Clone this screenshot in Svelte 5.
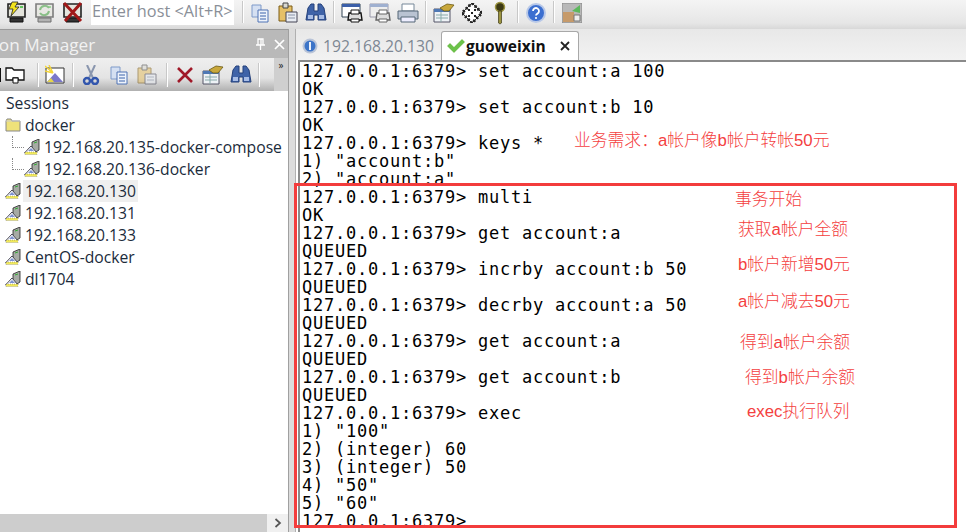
<script lang="ts">
  const lines = [
    '127.0.0.1:6379> set account:a 100', 'OK',
    '127.0.0.1:6379> set account:b 10', 'OK',
    '127.0.0.1:6379> keys *', '1) "account:b"', '2) "account:a"',
    '127.0.0.1:6379> multi', 'OK',
    '127.0.0.1:6379> get account:a', 'QUEUED',
    '127.0.0.1:6379> incrby account:b 50', 'QUEUED',
    '127.0.0.1:6379> decrby account:a 50', 'QUEUED',
    '127.0.0.1:6379> get account:a', 'QUEUED',
    '127.0.0.1:6379> get account:b', 'QUEUED',
    '127.0.0.1:6379> exec',
    '1) "100"', '2) (integer) 60', '3) (integer) 50', '4) "50"', '5) "60"',
    '127.0.0.1:6379>'
  ];

  // hand-placed notes on top of the terminal
  const notes = [
    { text: '业务需求：a帐户像b帐户转帐50元', x: 574, y: 130 },
    { text: '事务开始', x: 735, y: 189 },
    { text: '获取a帐户全额', x: 738, y: 219 },
    { text: 'b帐户新增50元', x: 738, y: 254 },
    { text: 'a帐户减去50元', x: 738, y: 291 },
    { text: '得到a帐户余额', x: 740, y: 332 },
    { text: '得到b帐户余额', x: 745, y: 367 },
    { text: 'exec执行队列', x: 747, y: 401 }
  ];

  const hosts = ['192.168.20.130', '192.168.20.131', '192.168.20.133', 'CentOS-docker', 'dl1704'];
</script>

{#snippet server()}
  <svg class="server" width="16" height="16" viewBox="0 0 16 16">
    <path d="M8 3l7-3v11l-3 2H8z" fill="#a6aaa4" stroke="#222" stroke-width=".8" />
    <path d="M10 4l3-1" stroke="#3a3" />
    <path d="M0.500 14l6.500-7 6 7z" fill="#fff" stroke="#334" stroke-width=".9" />
    <path d="M4 12l3-3 3 3z" fill="#7d92d0" />
    <path d="M1 13h12v2.500H1z" fill="#f2ea5c" stroke="#666" stroke-width=".5" stroke-dasharray="1 1" />
  </svg>
{/snippet}

{#snippet monitor(color: string)}
  <path d="M3 3h17v13H3z" fill="#e4e4dc" stroke="#222" stroke-width="1.6" />
  <path d="M5 17h13v4H5z" fill={color} stroke="#111" />
  <path d="M15 6h3" stroke="#3b3" stroke-width="1.5" />
{/snippet}

{#snippet copy()}
  <svg width="20" height="20" viewBox="0 0 20 20">
    <path d="M2 2h9v12H2z" fill="#d5e0f2" stroke="#7f9ac9" />
    <path d="M8 7h10v12H8z" fill="#eef3fb" stroke="#4e72b4" />
    <path d="M10 10h6M10 13h6M10 16h6" stroke="#3a62aa" />
  </svg>
{/snippet}

{#snippet paste(faded: boolean)}
  <svg width="20" height="22" viewBox="0 0 20 22" opacity={faded ? 0.55 : 1}>
    <path d="M1 4h13v15H1z" fill="#e5c067" stroke="#7c5d16" />
    <path d="M5 1h5v5H5z" fill="#d8d8d0" stroke="#444" />
    <path d="M8 10h11v10H8z" fill="#e8ecf2" stroke="#445" />
    <path d="M10 13h7M10 16h7" stroke="#8892a6" />
  </svg>
{/snippet}

{#snippet binoculars()}
  <svg width="22" height="20" viewBox="0 0 22 20">
    <path d="M3 5l3-4h3v7h4V1h3l3 4 2 12h-8v-5H9v5H1z" fill="#3f63a8" stroke="#24407a" />
    <path d="M3 12h5v4H3zM14 12h5v4h-5z" fill="#a8bde6" />
  </svg>
{/snippet}

{#snippet props()}
  <svg width="22" height="20" viewBox="0 0 22 20">
    <path d="M1 6h16v13H1z" fill="#eef2f6" stroke="#556" />
    <path d="M1 6h16v3H1z" fill="#4f78b4" />
    <path d="M3 12h12M3 15h12M8 9v10" stroke="#8aa" />
    <path d="M7 5l7-4 7 1-5 6-5 0z" fill="#c9a83c" stroke="#6b5a17" stroke-width=".8" />
  </svg>
{/snippet}

{#snippet printer(first: boolean)}
  <svg width="22" height="22" viewBox="0 0 22 22">
    <path d="M1 2h18v13H1z" fill={first ? '#fff' : '#eee'} stroke={first ? '#345' : '#99a'} />
    <path d="M1 2h18v3H1z" fill={first ? '#3b5fa8' : '#9fb0d0'} />
    <path d="M8 11h12l1 7H7z" fill="#ddd" stroke={first ? '#111' : '#666'} stroke-width="1.4" />
    <path d="M10 8h8v4h-8zM10 17h8v3h-8z" fill="#fff" stroke={first ? '#111' : '#666'} />
  </svg>
{/snippet}

<div class="window">
  <header class="toolbar">
    <div class="tool">
      <svg width="24" height="24" viewBox="0 0 24 24">
        {@render monitor('#333')}
        <path d="M7 1h6l-3 5h4L6 15l2-7H4z" fill="#f2e21c" stroke="#222" stroke-width=".8" />
      </svg>
    </div>
    <div class="tool">
      <svg width="24" height="24" viewBox="0 0 24 24" opacity=".55">
        {@render monitor('#888')}
        <path d="M7 9a5 5 0 0 1 9-2M16 10a5 5 0 0 1-9 2" fill="none" stroke="#3a9a35" stroke-width="2" />
      </svg>
    </div>
    <div class="tool">
      <svg width="24" height="24" viewBox="0 0 24 24">
        {@render monitor('#333')}
        <path d="M3 2l17 18M20 2L4 20" stroke="#a01818" stroke-width="3" />
      </svg>
    </div>
    <div class="host">Enter host &lt;Alt+R&gt;</div>
    <i class="sep s-host"></i>
    <div class="tool">{@render copy()}</div>
    <div class="tool">{@render paste(false)}</div>
    <div class="tool">{@render binoculars()}</div>
    <i class="sep"></i>
    <div class="tool">{@render printer(true)}</div>
    <div class="tool">{@render printer(false)}</div>
    <div class="tool">
      <svg width="22" height="20" viewBox="0 0 22 20">
        <path d="M5 1h12v7H5z" fill="#fff" stroke="#789" />
        <path d="M1 8h20v8H1z" fill="#b9c3d2" stroke="#567" />
        <path d="M4 14h14v5H4z" fill="#eef" stroke="#567" />
      </svg>
    </div>
    <i class="sep"></i>
    <div class="tool">{@render props()}</div>
    <div class="tool">
      <svg width="20" height="20" viewBox="0 0 20 20">
        <path d="M10 0l10 10-10 10L0 10z" fill="#fff" stroke="#333" />
        <path d="M10 0l10 10-10 10L0 10z" fill="none" stroke="#222" stroke-width="3" stroke-dasharray="2 2" />
        <path d="M6 6h2v2H6zM12 6h2v2h-2zM9 9h2v2H9zM6 12h2v2H6zM12 12h2v2h-2z" fill="#222" />
      </svg>
    </div>
    <div class="tool">
      <svg width="12" height="24" viewBox="0 0 12 24">
        <circle cx="6" cy="6" r="4.5" fill="#3d3a14" stroke="#9c9440" stroke-width="1.5" />
        <path d="M4.5 10h3v12l-1.5 1-1.5-1z" fill="#9c9440" stroke="#3d3a14" stroke-width=".7" />
      </svg>
    </div>
    <i class="sep"></i>
    <div class="tool">
      <svg width="20" height="20" viewBox="0 0 20 20">
        <circle cx="10" cy="10" r="9" fill="#3c6fd0" stroke="#b8c8e8" stroke-width="2" />
        <path d="M7 8a3 3 0 1 1 4.5 2.6c-1 .6-1.5 1-1.5 2" fill="none" stroke="#fff" stroke-width="1.8" />
        <circle cx="10" cy="15" r="1.1" fill="#fff" />
      </svg>
    </div>
    <i class="sep"></i>
    <div class="tool">
      <svg width="20" height="20" viewBox="0 0 20 20">
        <path d="M0 0h20v20H0z" fill="#b8b8b8" stroke="#888" />
        <path d="M1 9h11v10H1z" fill="#c69a6a" />
        <path d="M10 8l8-6v8z" fill="#5cb85c" />
        <path d="M12 12h6v6h-6z" fill="#eee" stroke="#777" />
      </svg>
    </div>
  </header>

  <div class="main">
    <aside class="sidebar">
      <div class="title">
        <span class="title-text">Session Manager</span>
        <svg width="11" height="13" viewBox="0 0 11 13"><path d="M3 1h5v6H3zM1 7h9M5.500 7v5M6 1v6" fill="none" stroke="#fff" stroke-width="1.300" /></svg>
        <svg width="11" height="11" viewBox="0 0 11 11"><path d="M1 1l9 9M10 1l-9 9" stroke="#fff" stroke-width="1.700" /></svg>
      </div>
      <div class="panel-tools">
        <i class="stub"></i>
        <div class="tool">
          <svg width="20" height="20" viewBox="0 0 20 20">
            <path d="M1 15V3h6l2 2h10v10h-6v-2H8v2z" fill="#fff" stroke="#111" stroke-width="1.300" />
            <path d="M8 13h5v5H8z" fill="#fff" stroke="#111" />
          </svg>
        </div>
        <i class="sep s-folder"></i>
        <div class="tool">
          <svg width="20" height="20" viewBox="0 0 20 20">
            <path d="M1 3h18v15H1z" fill="#fff" stroke="#333" />
            <path d="M2 17l8-9 8 9z" fill="#7b78c9" />
            <path d="M2 17l4-4 3 4z" fill="#e6d64a" />
            <path d="M0 1l8 7M4 0l4 8M0 6l8 2" stroke="#f4d53a" stroke-width="1.500" />
          </svg>
        </div>
        <i class="sep"></i>
        <div class="tool">
          <svg width="18" height="20" viewBox="0 0 18 20">
            <path d="M5 0l6 13M13 0L7 13" stroke="#8a96ae" stroke-width="2" />
            <circle cx="5" cy="16" r="3" fill="none" stroke="#3256ad" stroke-width="2.400" />
            <circle cx="13" cy="16" r="3" fill="none" stroke="#3256ad" stroke-width="2.400" />
          </svg>
        </div>
        <div class="tool">{@render copy()}</div>
        <div class="tool">{@render paste(true)}</div>
        <i class="sep s-wide"></i>
        <div class="tool">
          <svg width="18" height="18" viewBox="0 0 18 18"><path d="M2 2l14 14M16 2L2 16" stroke="#a01828" stroke-width="2.600" /></svg>
        </div>
        <div class="tool">{@render props()}</div>
        <div class="tool">{@render binoculars()}</div>
        <i class="sep"></i>
        <span class="more">»</span>
      </div>

      <div class="tree">
        <div class="row root">Sessions</div>
        <div class="row">
          <svg width="16" height="14" viewBox="0 0 16 14">
            <path d="M1 13V3l1-2h4l1 2h8v10z" fill="#efe27a" stroke="#888" />
            <path d="M1 3h14" stroke="#ccc" />
          </svg>
          <span>docker</span>
        </div>
        <div class="row child">
          <i class="guide"></i>{@render server()}<span>192.168.20.135-docker-compose</span>
        </div>
        <div class="row child">
          <i class="guide"></i>{@render server()}<span>192.168.20.136-docker</span>
        </div>
        {#each hosts as host, i}
          <div class="row">
            {@render server()}<span class:selected={i === 0}>{host}</span>
          </div>
        {/each}
      </div>

      <div class="hscroll">
        <div class="arrow">
          <svg width="8" height="10" viewBox="0 0 8 10"><path d="M1.500 1l4.500 4-4.500 4" fill="none" stroke="#555" stroke-width="1.700" /></svg>
        </div>
      </div>
    </aside>

    <div class="splitter"></div>

    <section class="content">
      <div class="tabs">
        <div class="tab">
          <svg width="16" height="16" viewBox="0 0 16 16">
            <circle cx="8" cy="8" r="7.500" fill="#b9c4d8" />
            <circle cx="8" cy="8" r="5.500" fill="#3c74c8" />
            <path d="M8 4v8" stroke="#fff" stroke-width="1.800" />
          </svg>
          192.168.20.130
        </div>
        <div class="tab active">
          <svg width="20" height="16" viewBox="0 0 20 16">
            <path d="M1 8l3-3 4 4 8-8 3 3L8 15z" fill="#6cc24a" stroke="#c4dfb4" />
          </svg>
          <b>guoweixin</b>
          <svg class="close" width="10" height="10" viewBox="0 0 10 10"><path d="M1 1l8 8M9 1L1 9" stroke="#222" stroke-width="1.800" /></svg>
        </div>
      </div>
      <pre class="terminal">{lines.join('\n')}</pre>
    </section>
  </div>

  <div class="redbox"></div>
  {#each notes as note}
    <div class="note" style="left: {note.x}px; top: {note.y}px">{note.text}</div>
  {/each}
</div>

<style>
  :global(body) {
    margin: 0;
  }

  .window {
    position: relative;
    display: flex;
    flex-direction: column;
    width: 966px;
    height: 532px;
    overflow: hidden;
    background: #fff;
    font-family: "Open Sans", "Noto Sans", sans-serif;
  }

  .toolbar {
    display: flex;
    align-items: flex-start;
    flex: none;
    height: 29px;
    padding-left: 3px;
    box-sizing: border-box;
    background: linear-gradient(#f4f4f4, #e6e6e6 80%, #d8d8d8);
  }

  .tool {
    display: flex;
    align-items: center;
    justify-content: center;
    flex: none;
    width: 28px;
    height: 25px;
  }

  .panel-tools .tool {
    height: 33px;
  }

  .host {
    flex: none;
    width: 143px;
    height: 25px;
    margin-left: 4px;
    background: #fff;
    color: #8a8f98;
    font-size: 16.300px;
    line-height: 22px;
    padding-left: 1px;
    box-sizing: border-box;
    white-space: nowrap;
  }

  .sep {
    flex: none;
    width: 1px;
    height: 22px;
    margin: 1px 3px 0;
    background: #c8c8c8;
    border-right: 1px solid #fff;
  }

  .sep.s-host {
    margin: 1px 2px 0 8px;
  }

  .panel-tools .sep {
    height: 24px;
    margin-top: 0;
  }

  .panel-tools .sep.s-folder {
    margin-left: 8px;
    margin-right: 2px;
  }

  .panel-tools .sep.s-wide {
    margin-left: 5px;
  }

  .main {
    display: flex;
    flex: 1;
    min-height: 0;
  }

  .sidebar {
    display: flex;
    flex-direction: column;
    flex: none;
    width: 289px;
    border-right: 1px solid #a0a0a0;
    box-sizing: border-box;
  }

  .title {
    display: flex;
    align-items: center;
    flex: none;
    gap: 8px;
    height: 29px;
    padding-right: 3px;
    background: #b9b9b9;
    border-top: 1px solid #9a9a9a;
    box-sizing: border-box;
    color: #f2f2f2;
    font-size: 17.200px;
    overflow: hidden;
  }

  .title-text {
    flex: 1;
    margin-left: -41px;
    white-space: nowrap;
  }

  .panel-tools {
    display: flex;
    align-items: center;
    flex: none;
    height: 33px;
    background: linear-gradient(#efefef, #e4e4e4 60%, #b0b0b0);
    overflow: hidden;
  }

  .stub {
    flex: none;
    width: 1px;
    height: 14px;
    background: #111;
  }

  .more {
    margin-left: auto;
    align-self: flex-start;
    width: 14px;
    height: 33px;
    background: #cfcfcf;
    color: #222;
    font-size: 10px;
    line-height: 14px;
    text-align: center;
  }

  .tree {
    flex: 1;
    min-height: 0;
    padding-top: 1px;
    color: #1b2b3b;
    font-size: 15.700px;
  }

  .row {
    display: flex;
    align-items: center;
    gap: 2px;
    height: 22px;
    padding-left: 5px;
    white-space: nowrap;
  }

  .row span {
    padding: 0 2px;
    line-height: 22px;
  }

  .root {
    padding-left: 6px;
  }

  .child {
    position: relative;
    padding-left: 24px;
  }

  .guide {
    position: absolute;
    left: 12px;
    top: 0;
    width: 11px;
    height: 11px;
    border-left: 1px dotted #888;
    border-bottom: 1px dotted #888;
  }

  .server {
    flex: none;
  }

  .selected {
    background: #efefef;
  }

  .hscroll {
    display: flex;
    justify-content: flex-end;
    flex: none;
    height: 18px;
    background: #cdcdcd;
  }

  .arrow {
    display: flex;
    align-items: center;
    justify-content: center;
    width: 21px;
    background: #f0f0f0;
  }

  .splitter {
    flex: none;
    width: 6px;
    background: #dcdcdc;
    border-right: 1px solid #b0b0b0;
  }

  .content {
    display: flex;
    flex-direction: column;
    flex: 1;
    min-width: 0;
  }

  .tabs {
    display: flex;
    align-items: flex-end;
    flex: none;
    height: 31px;
    background: linear-gradient(#e8e8e8, #f2f2f2);
  }

  .tab {
    display: flex;
    align-items: center;
    gap: 5px;
    width: 145px;
    height: 29px;
    padding-left: 6px;
    box-sizing: border-box;
    color: #7d8793;
    font-size: 15.700px;
    white-space: nowrap;
  }

  .tab.active {
    gap: 0;
    width: 138px;
    padding: 0 8px 0 4px;
    background: #fff;
    border: 1px solid #a8a8a8;
    border-bottom: 0;
    border-radius: 3px 3px 0 0;
    color: #111;
    font-size: 15.500px;
  }

  .close {
    margin-left: auto;
  }

  .terminal {
    flex: 1;
    min-height: 0;
    margin: 0 0 0 2px;
    padding: 0 0 0 2px;
    overflow: hidden;
    background: #fff;
    border-top: 2px solid #8a8a8a;
    border-left: 2px solid #8a8a8a;
    color: #000;
    font-family: "DejaVu Sans Mono", "Liberation Mono", monospace;
    font-size: 17px;
    letter-spacing: 0.77px;
    line-height: 18px;
  }

  .redbox {
    position: absolute;
    left: 294px;
    top: 183px;
    width: 663px;
    height: 345px;
    box-sizing: border-box;
    border: 3px solid #f33c3c;
  }

  .note {
    position: absolute;
    color: #f44040;
    font-family: "Liberation Sans", "Noto Sans CJK SC", sans-serif;
    font-size: 16.800px;
    font-weight: 300;
    line-height: 22px;
    white-space: nowrap;
  }
</style>
